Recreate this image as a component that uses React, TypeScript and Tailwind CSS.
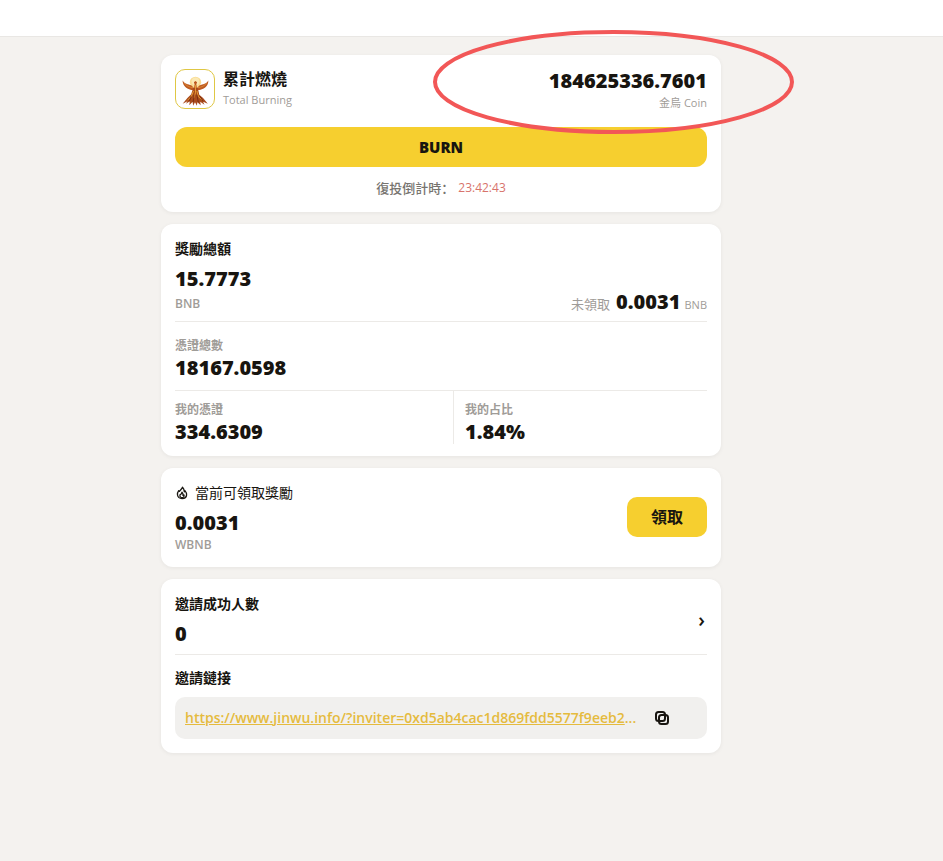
import type { ReactNode } from "react";

function Card({ children }: { children: ReactNode }) {
  return (
    <section className="rounded-xl bg-white px-3.5 pt-3.5 pb-3 shadow-[0_1px_4px_rgba(0,0,0,0.06)]">
      {children}
    </section>
  );
}

function Amount({ children }: { children: ReactNode }) {
  return <p className="font-['Noto_Sans',sans-serif] text-xl leading-6 font-black">{children}</p>;
}

function Label({ children }: { children: ReactNode }) {
  return <p className="text-xs leading-5 font-semibold text-[#9f9c98]">{children}</p>;
}

function Title({ children }: { children: ReactNode }) {
  return <h2 className="text-sm leading-[22px] font-bold">{children}</h2>;
}

function PhoenixLogo() {
  return (
    <svg viewBox="0 0 40 40" className="size-full" aria-hidden="true">
      <circle cx="20.500" cy="13" r="6" fill="#f9dc93" />
      <circle cx="20.500" cy="12" r="4" fill="#fbe9b4" />
      <path d="M7 11C8.500 14.500 13 15 16 16l3 3 .6-4-.8-2 1.700-1.500 1.700 1.500-.8 2 .6 4 3-3c3-1 7.500-1.500 9-5 .2 4.500-2.500 8.500-9 10h-9C10 19.500 6.800 15.500 7 11Z" fill="#bd5a20" />
      <path d="M9 14c2 3 5 4 8.500 4.500M32 14c-2 3-5 4-8.500 4.500" stroke="#e08a35" strokeWidth="0.900" fill="none" strokeLinecap="round" />
      <path d="M18 19h5l1.500 7 4 3.500 5 6-5-2 1.500 3-4.500-3 .5 3.500-3.500-3-.5 3.500-2-3.500-2 3.500-.5-4-3.500 3.500 .5-4-4 2.500 1.500-2.500L7 35.500l5-6 4-4Z" fill="#a94a1c" />
      <path d="M20.500 16v8l-2 6M22 22l1.500 6 4.500 4M18.500 22l-2.500 6-4 4" stroke="#efa93c" strokeWidth="0.900" fill="none" />
      <path d="M19 26l-1 8M22 26l1.500 8M16 28l-2 5M25.500 28l3 5" stroke="#74290f" strokeWidth="0.900" fill="none" />
    </svg>
  );
}

function FlameIcon() {
  return (
    <svg viewBox="0 0 14 14" className="size-3.5" fill="none" stroke="currentColor" strokeWidth="1.300" strokeLinejoin="round" aria-hidden="true">
      <path d="M7.500 1.300C7 3 5.300 4 4.500 5.400L3.700 4.600C2.700 6 2.200 7.400 2.500 9 2.900 11.300 4.700 12.600 7 12.600s4.400-1.400 4.600-3.700c.1-1.500-.5-2.900-1.500-4.100l-.8 1C9.200 4 8.700 2.500 7.500 1.300Z" />
      <path d="M7 6.200 6.200 8 5 8.800c-.4 1.800.6 2.900 2 2.900s2.500-1.200 2-2.700L8 9.400C8.200 8 7.800 7 7 6.200Z" />
    </svg>
  );
}

function CopyIcon() {
  return (
    <svg viewBox="0 0 16 16" className="size-4" fill="none" stroke="currentColor" strokeWidth="2" aria-hidden="true">
      <rect x="2" y="2" width="9" height="9" rx="2.500" />
      <rect x="5" y="5" width="9" height="9" rx="2.500" />
    </svg>
  );
}

export default function App() {
  return (
    <div
      lang="zh-Hant"
      className="min-h-screen bg-[#f4f2ef] font-['Open_Sans','Noto_Sans_CJK_TC',sans-serif] text-[#181510]"
    >
      <header className="h-[37px] border-b border-[#e9e7e4] bg-white" />
      <div className="pr-[61px]">
        <main className="mx-auto flex w-full max-w-[560px] flex-col gap-3 pt-[18px] pb-8">
          <Card>
            <div className="flex h-10 items-start justify-between">
              <div className="flex gap-2">
                <div className="size-10 overflow-hidden rounded-[10px] border border-[#dfc744] bg-white">
                  <PhoenixLogo />
                </div>
                <div>
                  <h1 className="text-base leading-5 font-bold">累計燃燒</h1>
                  <p className="text-[11px] leading-[22px] text-[#9f9c98]">Total Burning</p>
                </div>
              </div>
              <div className="relative text-right">
                <Amount>184625336.7601</Amount>
                <p className="text-[11px] leading-5 text-[#9f9c98]">金烏 Coin</p>
                <svg
                  viewBox="0 0 362 104"
                  className="pointer-events-none absolute -top-[39px] -right-[87px] h-[104px] w-[362px] max-w-none"
                  fill="none"
                  aria-hidden="true"
                >
                  <ellipse cx="181.500" cy="52" rx="178.500" ry="50" stroke="#f25757" strokeWidth="4" />
                </svg>
              </div>
            </div>
            <button type="button" className="mt-[18px] block h-10 w-full rounded-xl bg-[#f6cf2f] font-['Noto_Sans',sans-serif] text-[15px] font-black">
              BURN
            </button>
            <p className="mt-2 flex justify-center gap-1 text-[13px] leading-[25px]">
              <span lang="zh-Hans" className="font-['Noto_Sans_CJK_SC',sans-serif] font-medium text-[#77746f]">
                復投倒計時：
              </span>
              <time className="text-xs leading-[25px] text-[#d8736b]">23:42:43</time>
            </p>
          </Card>

          <Card>
            <Title>獎勵總額</Title>
            <div className="mt-[7px] flex items-end justify-between border-b border-[#eceae7] pb-[7px]">
              <div className="flex flex-col gap-[3px]">
                <Amount>15.7773</Amount>
                <Label>BNB</Label>
              </div>
              <div className="flex items-baseline gap-1 text-[11px] text-[#9f9c98]">
                <span className="mr-0.5 text-[13px]">未領取</span>
                <Amount>
                  <span className="text-[#181510]">0.0031</span>
                </Amount>
                <span>BNB</span>
              </div>
            </div>
            <div className="border-b border-[#eceae7] pt-3.5 pb-2.5">
              <Label>憑證總數</Label>
              <Amount>18167.0598</Amount>
            </div>
            <div className="grid grid-cols-2 gap-6">
              <div className="pt-[9px]">
                <Label>我的憑證</Label>
                <Amount>334.6309</Amount>
              </div>
              <div className="border-l border-[#eceae7] pt-[9px] pl-[11px]">
                <Label>我的占比</Label>
                <Amount>1.84%</Amount>
              </div>
            </div>
          </Card>

          <Card>
            <div className="flex items-center justify-between">
              <div>
                <h2 className="flex items-center gap-1.5 text-sm leading-[22px]">
                  <FlameIcon />
                  當前可領取獎勵
                </h2>
                <div className="mt-[7px]">
                  <Amount>0.0031</Amount>
                  <Label>WBNB</Label>
                </div>
              </div>
              <button type="button" className="mb-1 h-10 w-20 rounded-[10px] bg-[#f6cf2f] text-base font-bold">
                領取
              </button>
            </div>
          </Card>

          <Card>
            <div className="flex items-center justify-between border-b border-[#eceae7] pb-2">
              <div>
                <Title>邀請成功人數</Title>
                <div className="mt-[7px]">
                  <Amount>0</Amount>
                </div>
              </div>
              <button type="button" aria-label="邀請成功人數" className="px-0.5 text-xl leading-6 font-semibold">
                ›
              </button>
            </div>
            <div className="pt-3 pb-0.5">
              <Title>邀請鏈接</Title>
              <div className="mt-2 flex h-[42px] items-center rounded-[10px] bg-[#f1f0ee] px-2.5 text-sm font-semibold text-[#e5bb3e]">
                <a href="#invite" className="underline">
                  https://www.jinwu.info/?inviter=0xd5ab4cac1d869fdd5577f9eeb2
                </a>
                <span>...</span>
                <button type="button" aria-label="copy" className="ml-[18px] text-[#181510]">
                  <CopyIcon />
                </button>
              </div>
            </div>
          </Card>
        </main>
      </div>
    </div>
  );
}
